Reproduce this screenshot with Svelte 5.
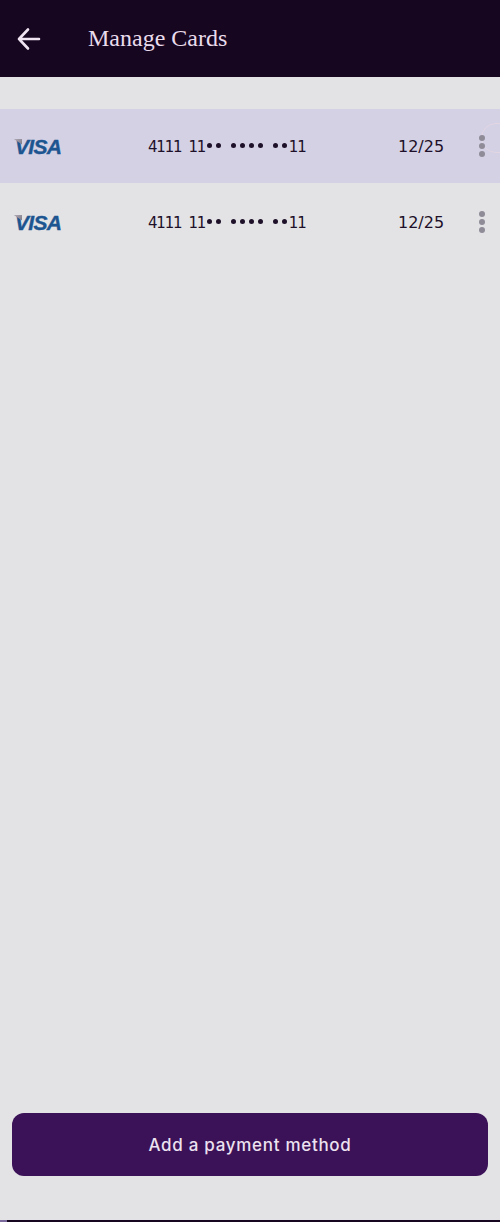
<script lang="ts">
  const cards = [
    { number: "4111 11•• •••• ••11", expiry: "12/25", active: true },
    { number: "4111 11•• •••• ••11", expiry: "12/25", active: false },
  ];
</script>

<div class="screen">
  <header class="topbar">
    <button class="back" aria-label="Back">
      <svg width="24" height="24" viewBox="0 0 24 24" fill="none" stroke="currentColor" stroke-width="2.600" stroke-linecap="round" stroke-linejoin="round">
        <path d="M2 12H22M11 2.500L2 12L11 21.500" />
      </svg>
    </button>
    <h1>Manage Cards</h1>
  </header>

  <ul class="cards">
    {#each cards as card}
      <li class="card" class:card--active={card.active}>
        <span class="visa"><i class="flick"></i>VISA</span>
        <span class="number">{#each card.number.split("") as ch}{#if ch === "•"}<i class="dot"></i>{:else}{ch}{/if}{/each}</span>
        <span class="expiry">{card.expiry}</span>
        <button class="more" aria-label="More options">
          <i></i><i></i><i></i>
        </button>
        {#if card.active}<span class="ripple"></span>{/if}
      </li>
    {/each}
  </ul>

  <div class="footer">
    <button class="add">Add a payment method</button>
  </div>
  <div class="navline"><i></i></div>
</div>

<style>
  :global(body) {
    margin: 0;
    background: #e3e3e6;
  }
  .screen {
    display: flex;
    flex-direction: column;
    height: 1222px;
    background: #e3e3e6;
    overflow: hidden;
  }
  .topbar {
    display: flex;
    align-items: center;
    height: 77px;
    flex: none;
    padding-left: 17px;
    box-sizing: border-box;
    background: #17061f;
    color: #f0e4f2;
  }
  .back {
    display: flex;
    padding: 0;
    border: none;
    background: none;
    color: inherit;
  }
  h1 {
    margin: 0 0 0 47px;
    font-family: "Liberation Serif", serif;
    font-size: 24px;
    font-weight: 400;
    color: #e9dcec;
  }
  .cards {
    list-style: none;
    margin: 32px 0 0;
    padding: 0;
    flex: 1;
  }
  .card {
    position: relative;
    display: flex;
    align-items: center;
    height: 78px;
    overflow: hidden;
  }
  .card--active {
    height: 74px;
    background: #d4d1e5;
  }
  .visa {
    position: relative;
    width: 148px;
    flex: none;
    box-sizing: border-box;
    margin-top: 1px;
    padding-left: 15px;
    font-family: "Liberation Sans", sans-serif;
    font-size: 21px;
    font-style: italic;
    font-weight: 700;
    letter-spacing: -0.7px;
    color: #1d5590;
    -webkit-text-stroke: 0.4px #1d5590;
  }
  .flick {
    position: absolute;
    left: 13px;
    top: 4px;
    width: 9px;
    height: 6px;
    background: linear-gradient(135deg, #b3adb8, #7d7a88);
    clip-path: polygon(0 0, 100% 0, 100% 100%);
  }
  .number {
    width: 250px;
    flex: none;
    margin-top: 1px;
    font-family: "DejaVu Sans", sans-serif;
    font-size: 15px;
    letter-spacing: -1.2px;
    word-spacing: 3.500px;
    color: #1d1028;
    white-space: pre;
  }
  .dot {
    display: inline-block;
    width: 5px;
    height: 5px;
    margin: 0 1.850px;
    vertical-align: 4px;
    border-radius: 50%;
    background: #1d1028;
  }
  .expiry {
    width: 81px;
    flex: none;
    font-family: "DejaVu Sans", sans-serif;
    font-size: 16px;
    color: #1d1028;
  }
  .more {
    position: relative;
    z-index: 1;
    display: flex;
    flex-direction: column;
    gap: 2px;
    padding: 0;
    border: none;
    background: none;
  }
  .more i {
    width: 6px;
    height: 6px;
    border-radius: 50%;
    background: #8f8b97;
  }
  .ripple {
    position: absolute;
    left: 481px;
    top: 14px;
    width: 44px;
    height: 30px;
    box-sizing: border-box;
    border: 1px solid #e2d6e3;
    border-radius: 15px;
  }
  .footer {
    flex: none;
    padding: 0 12px 44px;
  }
  .add {
    display: block;
    width: 100%;
    height: 63px;
    padding: 0;
    border: none;
    border-radius: 12px;
    background: #3b1157;
    color: #ece2f0;
    font-family: Inter, sans-serif;
    font-size: 17px;
    font-weight: 500;
    letter-spacing: 0.7px;
  }
  .navline {
    flex: none;
    height: 2px;
    background: #17061f;
  }
  .navline i {
    display: block;
    width: 7px;
    height: 2px;
    background: #7b6a9c;
  }
</style>
